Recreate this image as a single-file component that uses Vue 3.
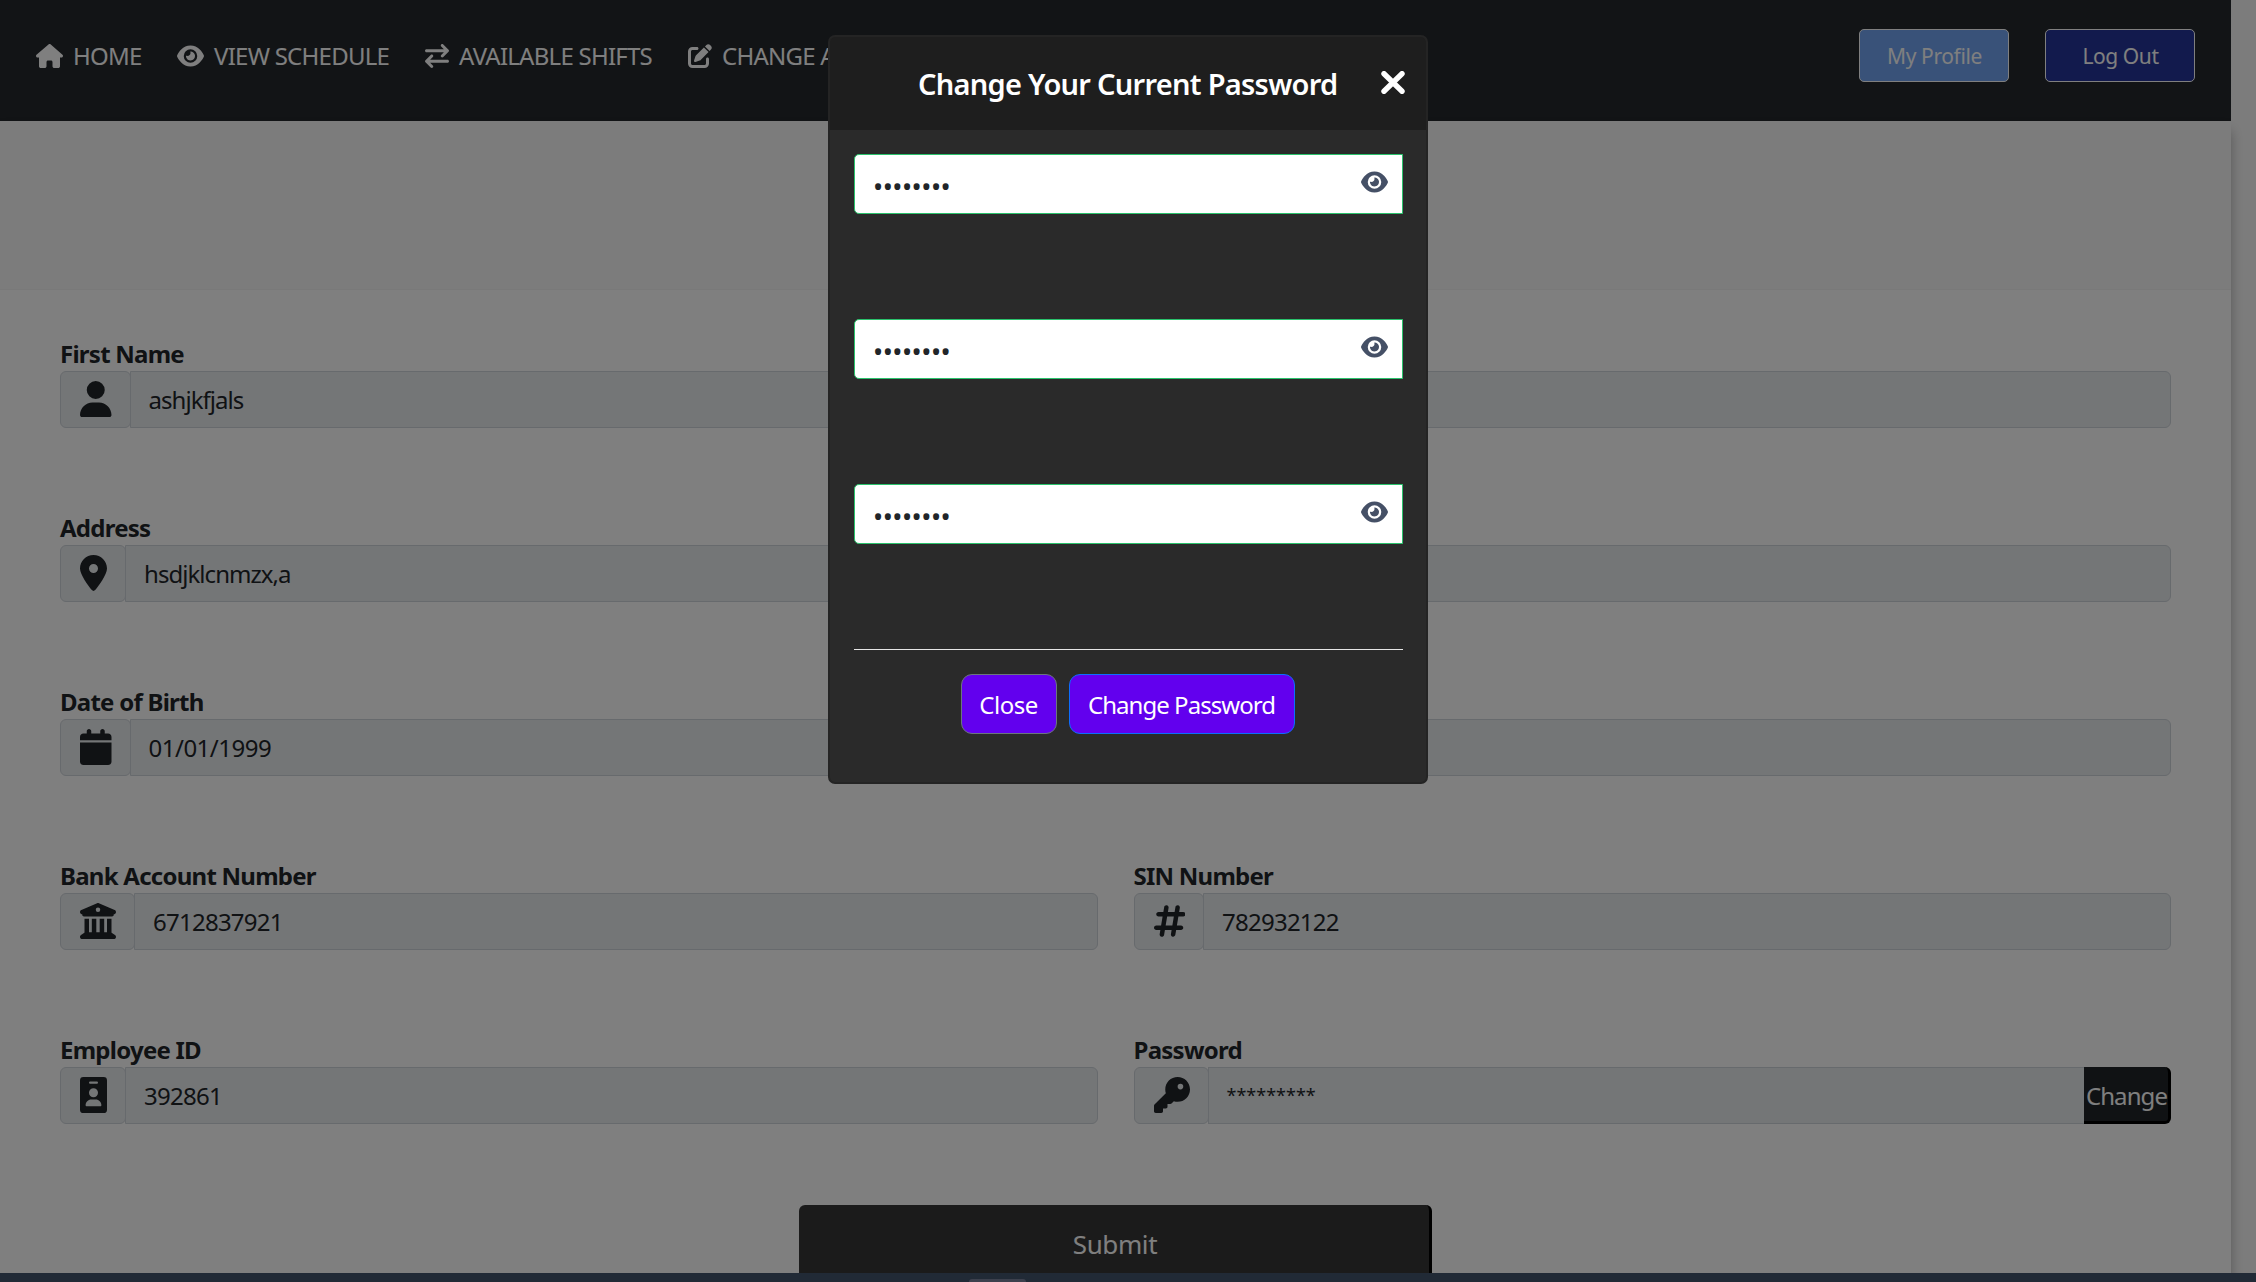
<script setup>
const icons = {
  home: { w: 576, d: 'M575.8 255.5c0 18-15 32.1-32 32.1h-32l.7 160.2c0 2.7-.2 5.4-.5 8.1V472c0 22.1-17.9 40-40 40H456c-1.1 0-2.2 0-3.3-.1c-1.4 .1-2.8 .1-4.2 .1H416 392c-22.1 0-40-17.9-40-40V448 384c0-17.7-14.3-32-32-32H256c-17.7 0-32 14.3-32 32v64 24c0 22.1-17.9 40-40 40H160 128.1c-1.5 0-3-.1-4.5-.2c-1.2 .1-2.4 .2-3.6 .2H104c-22.1 0-40-17.9-40-40V360c0-.9 0-1.9 .1-2.8V287.6H32c-18 0-32-14-32-32.1c0-9 3-17 10-24L266.4 8c7-7 15-8 22-8s15 2 21 7L564.8 231.5c8 7 12 15 11 24z' },
  eye: { w: 576, d: 'M288 32c-80.8 0-145.5 36.8-192.6 80.6C48.6 156 17.3 208 2.5 243.7c-3.3 7.9-3.3 16.7 0 24.6C17.3 304 48.6 356 95.4 399.4C142.5 443.2 207.2 480 288 480s145.5-36.8 192.6-80.6c46.8-43.5 78.1-95.4 93-131.1c3.3-7.9 3.3-16.7 0-24.6c-14.9-35.7-46.2-87.7-93-131.1C433.5 68.8 368.8 32 288 32zM144 256a144 144 0 1 1 288 0 144 144 0 1 1 -288 0zm144-64c0 35.3-28.7 64-64 64c-7.1 0-13.9-1.2-20.3-3.3c-5.5-1.8-11.9 1.6-11.7 7.4c.3 6.9 1.3 13.8 3.2 20.7c13.7 51.2 66.4 81.6 117.6 67.9s81.6-66.4 67.9-117.6c-11.1-41.5-47.8-69.4-88.6-71.1c-5.8-.2-9.2 6.1-7.4 11.7c2.1 6.4 3.3 13.2 3.3 20.3z' },
  swap: { w: 512, d: 'M32 176h370.8l-57.38 57.38c-12.5 12.5-12.5 32.75 0 45.25C351.6 284.9 359.8 288 368 288s16.38-3.125 22.62-9.375l112-112c12.5-12.5 12.5-32.75 0-45.25l-112-112c-12.5-12.5-32.75-12.5-45.25 0s-12.5 32.75 0 45.25L402.8 112H32c-17.69 0-32 14.31-32 32S14.31 176 32 176zM480 336H109.3l57.38-57.38c12.5-12.5 12.5-32.75 0-45.25s-32.75-12.5-45.25 0l-112 112c-12.5 12.5-12.5 32.75 0 45.25l112 112C127.6 508.9 135.8 512 144 512s16.38-3.125 22.62-9.375c12.5-12.5 12.5-32.75 0-45.25L109.3 400H480c17.69 0 32-14.31 32-32S497.7 336 480 336z' },
  edit: { w: 512, d: 'M471.6 21.7c-21.9-21.9-57.3-21.9-79.2 0L362.3 51.7l97.9 97.9 30.1-30.1c21.9-21.9 21.9-57.3 0-79.2L471.6 21.7zm-299.2 220c-6.1 6.1-10.8 13.6-13.5 21.9l-29.6 88.8c-2.9 8.6-.6 18.1 5.8 24.6s15.9 8.7 24.6 5.8l88.8-29.6c8.2-2.7 15.7-7.4 21.9-13.5L437.7 172.3 339.7 74.3 172.4 241.7zM96 64C43 64 0 107 0 160V416c0 53 43 96 96 96H352c53 0 96-43 96-96V320c0-17.7-14.3-32-32-32s-32 14.3-32 32v96c0 17.7-14.3 32-32 32H96c-17.7 0-32-14.3-32-32V160c0-17.7 14.3-32 32-32h96c17.7 0 32-14.3 32-32s-14.3-32-32-32H96z' },
  user: { w: 448, d: 'M224 256A128 128 0 1 0 224 0a128 128 0 1 0 0 256zm-45.7 48C79.8 304 0 383.8 0 482.3C0 498.7 13.3 512 29.7 512H418.3c16.4 0 29.7-13.3 29.7-29.7C448 383.8 368.2 304 269.7 304H178.3z' },
  pin: { w: 384, d: 'M215.7 499.2C267 435 384 279.4 384 192C384 86 298 0 192 0S0 86 0 192c0 87.4 117 243 168.3 307.2c12.3 15.3 35.1 15.3 47.4 0zM192 128a64 64 0 1 1 0 128 64 64 0 1 1 0-128z' },
  calendar: { w: 448, d: 'M96 32V64H48C21.5 64 0 85.5 0 112v48H448V112c0-26.5-21.5-48-48-48H352V32c0-17.7-14.3-32-32-32s-32 14.3-32 32V64H160V32c0-17.7-14.3-32-32-32S96 14.3 96 32zM448 192H0V464c0 26.5 21.5 48 48 48H400c26.5 0 48-21.5 48-48V192z' },
  bank: { w: 512, d: 'M243.4 2.6l-224 96c-14 6-21.8 21-18.7 35.8S16.8 160 32 160v8c0 13.3 10.7 24 24 24H456c13.3 0 24-10.7 24-24v-8c15.2 0 28.3-10.7 31.3-25.6s-4.8-29.9-18.7-35.8l-224-96c-8-3.4-17.2-3.4-25.2 0zM128 224H64V420.3c-.6 .3-1.2 .7-1.8 1.1l-48 32c-11.7 7.8-17 22.4-12.9 35.9S17.9 512 32 512H480c14.1 0 26.5-9.2 30.6-22.7s-1.1-28.1-12.9-35.9l-48-32c-.6-.4-1.2-.7-1.8-1.1V224H384V416H344V224H280V416H232V224H168V416H128V224zM256 64a32 32 0 1 1 0 64 32 32 0 1 1 0-64z' },
  badge: { w: 384, d: 'M48 0h288a48 48 0 0 1 48 48v416a48 48 0 0 1-48 48H48a48 48 0 0 1-48-48V48a48 48 0 0 1 48-48zM144 64a16 16 0 0 0 0 32h96a16 16 0 0 0 0-32zM192 160a64 64 0 1 0 0 128 64 64 0 1 0 0-128zM160 320c-44 0-80 36-80 80 0 8.800 7.200 16 16 16h192c8.800 0 16-7.200 16-16 0-44-36-80-80-80z' },
  hash: { w: 448, d: 'M181.3 32.4c17.4 2.9 29.2 19.4 26.3 36.8L197.8 128h95.1l11.5-69.3c2.9-17.4 19.4-29.2 36.8-26.3s29.2 19.4 26.3 36.8L357.8 128H416c17.7 0 32 14.3 32 32s-14.3 32-32 32H347.1L325.8 320H384c17.7 0 32 14.3 32 32s-14.3 32-32 32H315.1l-11.5 69.3c-2.9 17.4-19.4 29.2-36.8 26.3s-29.2-19.4-26.3-36.8l9.8-58.7H155.1l-11.5 69.3c-2.9 17.4-19.4 29.2-36.8 26.3s-29.2-19.4-26.3-36.8L90.2 384H32c-17.7 0-32-14.3-32-32s14.3-32 32-32h68.9l21.3-128H64c-17.7 0-32-14.3-32-32s14.3-32 32-32h68.9l11.5-69.3c2.9-17.4 19.4-29.2 36.8-26.3zM187.1 192L165.8 320h95.1l21.3-128H187.1z' },
  key: { w: 512, d: 'M336 352c97.2 0 176-78.8 176-176S433.2 0 336 0S160 78.8 160 176c0 18.7 2.9 36.8 8.3 53.7L7 391c-4.5 4.500-7 10.600-7 17v80c0 13.300 10.700 24 24 24h80c13.300 0 24-10.700 24-24V448h40c13.300 0 24-10.700 24-24V384h40c6.400 0 12.500-2.500 17-7l33.300-33.300c16.900 5.400 35 8.300 53.700 8.300zM376 96a40 40 0 1 1 0 80 40 40 0 1 1 0-80z' },
}

const links = [
  { icon: 'home', text: 'HOME', cls: 'l-home' },
  { icon: 'eye', text: 'VIEW SCHEDULE', cls: 'l-view' },
  { icon: 'swap', text: 'AVAILABLE SHIFTS', cls: 'l-shifts' },
  { icon: 'edit', text: 'CHANGE A', cls: 'l-change' },
]

const rows = [
  [{ label: 'First Name', icon: 'user', value: 'ashjkfjals' }],
  [{ label: 'Address', icon: 'pin', value: 'hsdjklcnmzx,a' }],
  [{ label: 'Date of Birth', icon: 'calendar', value: '01/01/1999', kind: 'date' }],
  [
    { label: 'Bank Account Number', icon: 'bank', value: '6712837921', kind: 'num' },
    { label: 'SIN Number', icon: 'hash', value: '782932122', kind: 'num' },
  ],
  [
    { label: 'Employee ID', icon: 'badge', value: '392861', kind: 'num' },
    { label: 'Password', icon: 'key', value: '*********', kind: 'stars', action: 'Change' },
  ],
]
</script>

<template>
  <div class="screen">
    <div class="page">
      <header class="nav">
        <nav class="links">
          <a v-for="l in links" :key="l.text" class="link" :class="l.cls">
            <svg class="nav-icon" :viewBox="`0 0 ${icons[l.icon].w} 512`"><path :d="icons[l.icon].d" /></svg>
            <span>{{ l.text }}</span>
          </a>
        </nav>
        <div class="account">
          <button class="btn profile">My Profile</button>
          <button class="btn logout">Log Out</button>
        </div>
      </header>
      <div class="content">
        <div class="band"></div>
        <main class="form">
          <div v-for="(row, i) in rows" :key="i" class="row">
            <div v-for="f in row" :key="f.label" class="field">
              <label class="label">{{ f.label }}</label>
              <div class="group">
                <span class="addon">
                  <svg class="field-icon" :viewBox="`0 0 ${icons[f.icon].w} 512`"><path fill-rule="evenodd" :d="icons[f.icon].d" /></svg>
                </span>
                <span class="value" :class="[f.kind, { joined: f.action }]">{{ f.value }}</span>
                <button v-if="f.action" class="change">{{ f.action }}</button>
              </div>
            </div>
          </div>
          <button class="submit">Submit</button>
        </main>
      </div>
    </div>

    <div class="backdrop"></div>

    <section class="modal">
      <div class="modal-head">
        <h2>Change Your Current Password</h2>
        <svg class="close-x" viewBox="0 0 24 23"><path d="M3 2.700 21 20.300M21 2.700 3 20.300" /></svg>
      </div>
      <div class="modal-body">
        <div v-for="n in 3" :key="n" class="pw">
          <span class="dots">••••••••</span>
          <svg class="pw-eye" viewBox="0 0 576 512"><path :d="icons.eye.d" /></svg>
        </div>
        <div class="rule"></div>
        <div class="actions">
          <button class="act close">Close</button>
          <button class="act primary">Change Password</button>
        </div>
      </div>
    </section>

    <div class="taskbar"><span class="tab"></span></div>
  </div>
</template>

<style>
body { margin: 0; overflow: hidden; }
</style>

<style scoped>
* { box-sizing: border-box; }
.screen {
  position: relative;
  width: 2256px;
  height: 1282px;
  overflow: hidden;
  background: #f9f9f9;
  font-family: "Noto Sans", "Open Sans", sans-serif;
  font-size: 24px;
  line-height: 36px;
  color: #212529;
}
button {
  font-family: inherit;
  margin: 0;
  padding: 0;
  white-space: nowrap;
}
.page {
  width: 2231px;
  height: 1282px;
}
.nav {
  width: 2231px;
  height: 121px;
  display: flex;
  justify-content: space-between;
  background: #24282c;
  padding: 29px 36px 0 36px;
}
.content {
  height: 1161px;
  background: #fff;
  box-shadow: 0 10px 12px rgba(0, 0, 0, 0.3);
}
.links { display: flex; padding-top: 9px; }
.link {
  display: flex;
  color: #fff;
  white-space: nowrap;
  height: 36px;
}
.nav-icon { height: 24px; margin: 6px 10px 0 0; fill: #fff; flex: none; display: block; }
.link span { letter-spacing: -0.75px; }
.l-home { width: 141px; }
.l-view { width: 248px; }
.l-shifts { width: 263px; }
.account { display: flex; gap: 36px; }
.btn {
  width: 150px;
  height: 53px;
  border: 1px solid #fff;
  border-radius: 5px;
  color: #fff;
  font-size: 21px;
  letter-spacing: -0.4px;
}
.btn { padding: 1px 0 0 1px; }
.profile { background: #72a4f2; }
.logout { background: #24349a; }
.band { height: 169px; background: #f9f9f9; border-bottom: 1px solid #f2f2f2; }
.form {
  padding: 45px 60px 0;
  display: flex;
  flex-direction: column;
}
.row { display: flex; gap: 36px; height: 174px; }
.field { flex: 1; min-width: 0; }
.label { display: block; font-weight: 700; height: 36px; padding-top: 1px; letter-spacing: -0.75px; white-space: nowrap; }
.group { display: flex; height: 57px; }
.addon {
  border: 1px solid #ced4da;
  border-radius: 6px;
  background: #e9ecef;
  padding: 9px 18px 0 19px;
  margin-right: -1px;
}
.field-icon { display: block; height: 36px; fill: #212529; }
.value {
  flex: 1;
  border: 1px solid #ced4da;
  border-radius: 0 6px 6px 0;
  background: #e9ecef;
  padding: 10px 18px;
  letter-spacing: -0.95px;
}
.value.num { letter-spacing: -0.75px; }
.value.date { letter-spacing: -0.5px; }
.value.stars { font-size: 18px; letter-spacing: 0; padding-top: 9px; }
.joined { border-radius: 0; }
.change {
  width: 87px;
  margin-left: -1px;
  font-size: 24px;
  letter-spacing: -0.9px;
  padding: 2px 0 0 1px;
  color: #fff;
  background: #212529;
  border: 3px solid #000;
  border-width: 0 3px 3px 0;
  border-radius: 0 6px 6px 0;
}
.submit {
  align-self: center;
  width: 633px;
  height: 84px;
  font-size: 26px;
  letter-spacing: -0.4px;
  padding: 0 0 4px 2px;
  color: #fff;
  background: #363636;
  border: solid #000;
  border-width: 0 3px 3px 0;
  border-radius: 6px;
}
.backdrop { position: absolute; inset: 0; background: rgba(0, 0, 0, 0.5); }
.modal {
  position: absolute;
  left: 828px;
  top: 35px;
  width: 600px;
  height: 749px;
  border: 2px solid #242424;
  border-radius: 7px;
  background: #2a2a2a;
  overflow: hidden;
}
.modal-head {
  height: 93px;
  background: #1e1e1e;
  display: flex;
  align-items: center;
  padding: 0 21px 0 88px;
  justify-content: space-between;
}
h2 { margin: 0; font-size: 29px; font-weight: 600; color: #fff; white-space: nowrap; letter-spacing: -0.72px; }
.close-x { width: 24px; height: 23px; margin-bottom: 2px; fill: none; stroke: #fff; stroke-width: 5.400; stroke-linecap: round; }
.modal-body { padding: 24px 23px 0 24px; }
.pw {
  height: 60px;
  margin-bottom: 105px;
  border: 1px solid #2ac26c;
  border-radius: 5px 0 0 5px;
  background: #fff;
  display: flex;
  justify-content: space-between;
  padding: 0 14px 0 18px;
}
.dots { padding-top: 14px; font-size: 27px; letter-spacing: -0.5px; }
.pw-eye { height: 24px; margin-top: 15px; fill: #455066; }
.rule { height: 1px; background: #e6e6e6; }
.actions { display: flex; justify-content: center; gap: 12px; padding: 24px 2px 0 0; }
.act {
  height: 60px;
  font-size: 24px;
  color: #fff;
  background: #6200ee;
  border: 1px solid #6c757d;
  border-radius: 11px;
  letter-spacing: -0.5px;
  padding-top: 1px;
}
.close { width: 96px; }
.primary { width: 226px; border-color: #0d6efd; letter-spacing: -0.95px; }
.taskbar { position: absolute; left: 0; bottom: 0; width: 2256px; height: 9px; background: #212a36; }
.tab { display: block; width: 57px; height: 3px; margin: 6px 0 0 969px; background: #3c404d; border-radius: 4px 4px 0 0; }
</style>
